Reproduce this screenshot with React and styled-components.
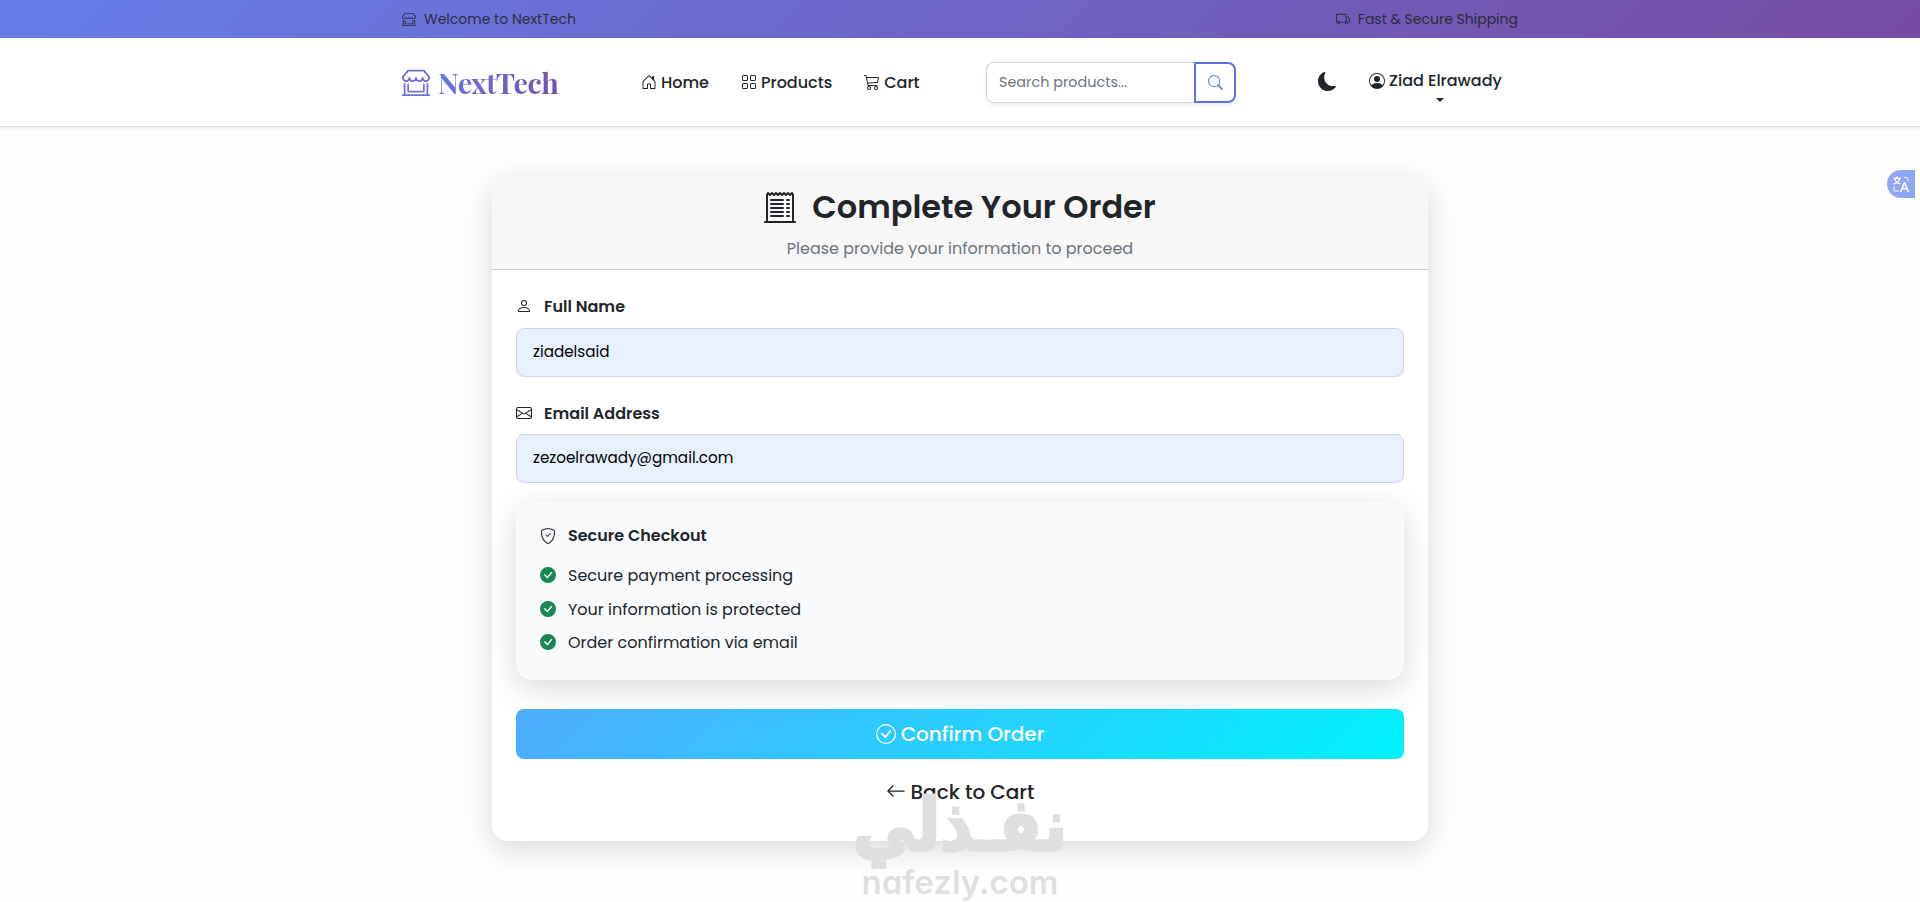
import React from 'react';
import styled, { createGlobalStyle } from 'styled-components';
import {
  BsArrowLeft,
  BsCart3,
  BsCheckCircle,
  BsCheckCircleFill,
  BsEnvelope,
  BsGrid,
  BsHouseDoor,
  BsMoonFill,
  BsPerson,
  BsPersonCircle,
  BsReceiptCutoff,
  BsSearch,
  BsShieldCheck,
  BsShopWindow,
  BsTruck,
} from 'react-icons/bs';

const GlobalStyle = createGlobalStyle`
  * {
    box-sizing: border-box;
  }

  body {
    margin: 0;
    background: #fefefe;
    color: #212529;
    font-family: Poppins, Inter, "Open Sans", sans-serif;
    font-size: 16px;
    line-height: 24px;
    overflow: hidden;
  }

  svg {
    display: block;
    flex: none;
  }
`;

const Page = styled.div`
  position: relative;
  height: 902px;
  overflow: hidden;
`;

const Container = styled.div`
  width: 1116px;
  margin: 0 auto;
`;

const TopBar = styled.div`
  height: 38px;
  background: linear-gradient(135deg, #667eea 0%, #764ba2 100%);
`;

const TopBarInner = styled(Container)`
  height: 100%;
  display: flex;
  align-items: center;
  justify-content: space-between;
`;

const TopNote = styled.span`
  display: flex;
  align-items: center;
  gap: 8px;
  font-size: 14px;
  color: rgba(33, 37, 41, 0.9);
`;

const Header = styled.header`
  height: 89px;
  background: #fff;
  border-bottom: 1px solid #dee2e6;
  box-shadow: 0 2px 4px rgba(0, 0, 0, 0.06);
`;

const HeaderInner = styled(Container)`
  height: 100%;
  display: grid;
  grid-template-columns: 239px 345px 250px 1fr;
  align-items: center;
`;

const Brand = styled.a`
  display: flex;
  align-items: center;
  gap: 8px;
  padding-bottom: 1px;
  color: #6b6fd6;
`;

const BrandName = styled.span`
  font-family: "Playfair Display", "Liberation Serif", serif;
  font-size: 28.8px;
  font-weight: 700;
  line-height: 40px;
  letter-spacing: -0.5px;
  background: linear-gradient(135deg, #667eea 0%, #764ba2 100%);
  background-clip: text;
  -webkit-background-clip: text;
  color: transparent;
`;

const Nav = styled.nav`
  display: flex;
  gap: 32px;
`;

const NavLink = styled.a`
  display: flex;
  align-items: center;
  gap: 4px;
  padding-top: 1px;
  font-weight: 500;

  svg {
    margin-top: -1px;
  }
`;

const SearchGroup = styled.div`
  display: flex;
  height: 41px;
  border-radius: 8px;
  box-shadow: 0 2px 4px rgba(0, 0, 0, 0.08);
`;

const SearchInput = styled.input`
  flex: 1;
  min-width: 0;
  padding: 0 12px;
  border: 1px solid #ced4da;
  border-right: 0;
  border-radius: 8px 0 0 8px;
  outline: none;
  font: inherit;
  font-size: 14.4px;

  &::placeholder {
    color: #6c757d;
    opacity: 1;
  }
`;

const SearchButton = styled.button`
  display: grid;
  place-items: center;
  width: 42px;
  border: 2px solid #6370e0;
  border-radius: 0 8px 8px 0;
  background: #fff;
  color: #667eea;
`;

const Actions = styled.div`
  display: flex;
  align-items: center;
  gap: 32px;
  padding: 0 0 2px 82px;
`;

const UserMenu = styled.div`
  display: flex;
  flex-direction: column;
  align-items: center;
  gap: 5px;
  padding-top: 8px;
`;

const Caret = styled.span`
  margin-left: 9px;
  border: 4.5px solid transparent;
  border-top-color: #212529;
  border-bottom: 0;
`;

const Card = styled.main`
  width: 936px;
  height: 665px;
  margin: 49px auto 0;
  border-radius: 16px;
  background: #fff;
  box-shadow: 0 8px 30px rgba(0, 0, 0, 0.15);
  overflow: hidden;
`;

const CardHeader = styled.div`
  height: 94px;
  padding-top: 11px;
  border-bottom: 1px solid #c9cccf;
  background: #f7f7f7;
`;

const Title = styled.h2`
  display: flex;
  justify-content: center;
  align-items: center;
  gap: 16px;
  margin: 0 0 10px;
  font-size: 32px;
  font-weight: 600;
  line-height: 40px;

  svg {
    margin-top: -1px;
  }
`;

const Subtitle = styled.p`
  margin: 0;
  text-align: center;
  color: #6c757d;
`;

const CardBody = styled.div`
  padding: 24px 24px 0;
`;

const Field = styled.div`
  margin-bottom: ${(p) => p.$gap}px;
`;

const Label = styled.label`
  display: flex;
  align-items: center;
  gap: 12px;
  padding-top: 1px;
  margin-bottom: 8.6px;
  font-weight: 600;

  svg {
    margin-top: -2px;
  }
`;

const Input = styled.input`
  display: block;
  width: 100%;
  height: 49px;
  padding: 0 16px 2px;
  border: 1px solid #ced4e4;
  border-radius: 8px;
  background: #e8f0fe;
  color: #000;
  outline: none;
  font: inherit;
  font-size: 15.2px;
`;

const SecureBox = styled.section`
  height: 178px;
  padding: 24px;
  border-radius: 16px;
  background: #f8fafb;
  box-shadow: 0 8px 30px rgba(0, 0, 0, 0.15);
`;

const SecureTitle = styled.h6`
  display: flex;
  align-items: center;
  gap: 12px;
  margin: 0 0 19px;
  font-size: 16px;
  font-weight: 600;
  line-height: 19px;
`;

const SecureList = styled.ul`
  display: grid;
  gap: 9.5px;
  margin: 0;
  padding: 0;
  list-style: none;
`;

const SecureItem = styled.li`
  display: flex;
  align-items: center;
  gap: 12px;

  svg {
    margin-top: -2px;
    color: #198754;
  }
`;

const ConfirmButton = styled.button`
  display: flex;
  justify-content: center;
  align-items: center;
  gap: 5px;
  width: 100%;
  height: 50px;
  margin-top: 29px;
  padding: 0;
  border: 0;
  border-radius: 8px;
  background: linear-gradient(135deg, #4facfe 0%, #00f2fe 100%);
  color: #fff;
  font: inherit;
  font-size: 20px;
  font-weight: 500;

  svg {
    margin-top: -1px;
  }
`;

const BackLink = styled.a`
  display: flex;
  justify-content: center;
  align-items: center;
  gap: 5px;
  margin-top: 18px;
  font-size: 20px;
  font-weight: 500;
  line-height: 30px;

  svg {
    margin-top: -2px;
  }
`;

// floating translate handle on the right edge
const TranslateTab = styled.div`
  position: absolute;
  top: 170px;
  right: 5px;
  display: grid;
  place-items: center;
  width: 28px;
  height: 28px;
  border-radius: 14px 0 0 14px;
  background: #8fa6f8;
  color: #fff;
`;

const Watermark = styled.div`
  position: absolute;
  top: 781px;
  left: 50%;
  display: flex;
  flex-direction: column;
  align-items: center;
  transform: translateX(-50%);
  color: #dfdfdf;
  pointer-events: none;
`;

const WatermarkArabic = styled.span`
  font-family: "DejaVu Sans", sans-serif;
  font-size: 72px;
  font-weight: 700;
  line-height: 88px;
  white-space: nowrap;
  transform: scaleX(0.875);
  -webkit-text-stroke: 3px #dfdfdf;
`;

const WatermarkLatin = styled.span`
  margin-top: -7px;
  font-family: Inter, sans-serif;
  font-feature-settings: "cv11";
  font-size: 33px;
  font-weight: 600;
  line-height: 40px;
`;

const TranslateIcon = () => (
  <svg width="18" height="18" viewBox="0 0 18 18" fill="none" stroke="currentColor" strokeWidth="1.3">
    <path d="M1.5 3.4h7.4M5.2 1.2v2.2M2.9 3.8c.6 2.5 2.7 4.3 5.6 5.2M7.6 3.8C7 6.3 4.9 8.1 1.6 9" />
    <path d="M12 2.6h2.2c1 0 1.7.7 1.700 1.700V6M2 11.500v3c0 1 .7 1.700 1.700 1.700H7" opacity="0.7" />
    <path d="M8.600 17l3.700-9.300h.4l3.700 9.300M9.900 13.800h5.200" strokeWidth="1.6" />
  </svg>
);

const benefits = [
  'Secure payment processing',
  'Your information is protected',
  'Order confirmation via email',
];

const App = () => {
  return (
    <Page>
      <GlobalStyle />
      <TopBar>
        <TopBarInner>
          <TopNote>
            <BsShopWindow size={14} />
            Welcome to NextTech
          </TopNote>
          <TopNote>
            <BsTruck size={14} />
            Fast &amp; Secure Shipping
          </TopNote>
        </TopBarInner>
      </TopBar>

      <Header>
        <HeaderInner>
          <Brand>
            <BsShopWindow size={28} />
            <BrandName>NextTech</BrandName>
          </Brand>
          <Nav>
            <NavLink><BsHouseDoor /> Home</NavLink>
            <NavLink><BsGrid /> Products</NavLink>
            <NavLink><BsCart3 /> Cart</NavLink>
          </Nav>
          <SearchGroup>
            <SearchInput type="text" placeholder="Search products..." />
            <SearchButton type="button">
              <BsSearch size={15} />
            </SearchButton>
          </SearchGroup>
          <Actions>
            <BsMoonFill size={19} />
            <UserMenu>
              <NavLink><BsPersonCircle /> Ziad Elrawady</NavLink>
              <Caret />
            </UserMenu>
          </Actions>
        </HeaderInner>
      </Header>

      <Card>
        <CardHeader>
          <Title>
            <BsReceiptCutoff />
            Complete Your Order
          </Title>
          <Subtitle>Please provide your information to proceed</Subtitle>
        </CardHeader>
        <CardBody>
          <Field $gap={24}>
            <Label htmlFor="name"><BsPerson /> Full Name</Label>
            <Input id="name" type="text" defaultValue="ziadelsaid" />
          </Field>
          <Field $gap={19}>
            <Label htmlFor="email"><BsEnvelope /> Email Address</Label>
            <Input id="email" type="email" defaultValue="zezoelrawady@gmail.com" />
          </Field>
          <SecureBox>
            <SecureTitle><BsShieldCheck /> Secure Checkout</SecureTitle>
            <SecureList>
              {benefits.map((text) => (
                <SecureItem key={text}>
                  <BsCheckCircleFill />
                  {text}
                </SecureItem>
              ))}
            </SecureList>
          </SecureBox>
          <ConfirmButton type="button">
            <BsCheckCircle />
            Confirm Order
          </ConfirmButton>
          <BackLink>
            <BsArrowLeft />
            Back to Cart
          </BackLink>
        </CardBody>
      </Card>

      <TranslateTab>
        <TranslateIcon />
      </TranslateTab>

      <Watermark>
        <WatermarkArabic lang="ar" dir="rtl">نفـذلي</WatermarkArabic>
        <WatermarkLatin>nafezly.com</WatermarkLatin>
      </Watermark>
    </Page>
  );
};

export default App;
